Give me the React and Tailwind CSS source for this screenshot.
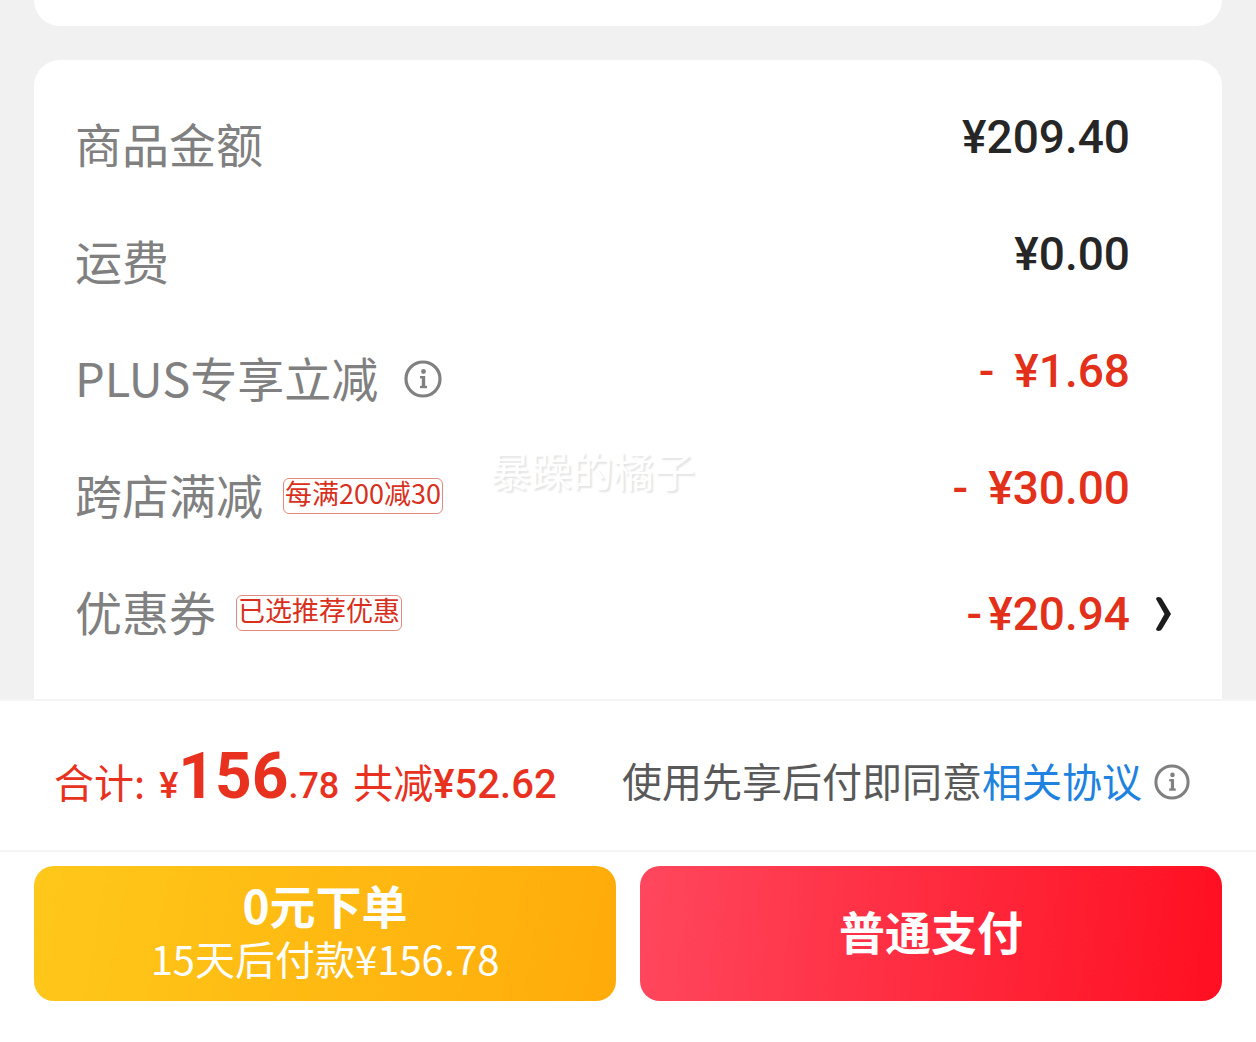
import clsx from "clsx";

const rows = [
  { label: "商品金额", amount: "¥209.40" },
  { label: "运费", amount: "¥0.00" },
  { label: "PLUS专享立减", info: true, sign: "-", amount: "¥1.68" },
  { label: "跨店满减", tag: "每满200减30", sign: "-", amount: "¥30.00" },
  { label: "优惠券", tag: "已选推荐优惠", sign: "-", amount: "¥20.94", link: true },
];

const InfoIcon = ({ className }) => (
  <svg viewBox="0 0 38 38" fill="none" stroke="#808080" className={className}>
    <circle cx="19" cy="19" r="17" strokeWidth="3.2" />
    <circle cx="19.5" cy="11.5" r="2.4" fill="#808080" stroke="none" />
    <path d="M16 17.2h4.5" strokeWidth="2.4" />
    <path d="M19.5 16v11" strokeWidth="3.4" />
    <path d="M16 27h7" strokeWidth="2.4" />
  </svg>
);

const ChevronIcon = () => (
  <svg viewBox="0 0 16 36" className="h-9 w-4" fill="#1c1c1c">
    <path d="M0 3Q0 1 2.5 1T6 3L15 18 6 33Q5 35 2.5 35T0 33L8.5 18Z" />
  </svg>
);

const Row = ({ label, info, tag, sign, amount, link }) => (
  <div className="flex h-[117px] items-center pl-[41px] pr-[50px]">
    <dt className="flex flex-1 items-center pb-1 text-[47px] leading-[60px] text-[#808080]">
      <span className="pb-1">{label}</span>
      {info && (
        <button type="button" aria-label="说明" className="ml-[26px]">
          <InfoIcon className="size-[38px]" />
        </button>
      )}
      {tag && (
        <span className="ml-5 h-9 rounded-md border border-[#e08a80] px-px text-[27px] leading-7 text-[#d8301c]">
          {tag}
        </span>
      )}
    </dt>
    <dd
      className={clsx(
        "flex items-center font-['Roboto','Noto_Sans_CJK_SC',sans-serif] text-[46px] font-medium leading-[60px]",
        sign ? "text-[#e2301a]" : "text-[#262626]",
        link ? "gap-[26px] pb-0.5" : "mr-[42px] pb-5"
      )}
    >
      <span className={clsx("flex", link ? "gap-1.5" : "gap-5")}>
        {sign && <span>{sign}</span>}
        <span>{amount}</span>
      </span>
      {link && (
        <button type="button" aria-label="选择优惠券">
          <ChevronIcon />
        </button>
      )}
    </dd>
  </div>
);

const Summary = () => (
  <div className="flex h-[151px] items-center justify-between border-b-2 border-[#f5f5f5] pl-[54px] pr-[66px] pt-3 text-[40px] leading-[60px]">
    <p className="flex items-baseline pb-2 text-[#e8321f]">
      <span>合计:</span>
      <span className="ml-3.5 flex items-baseline font-['Roboto','Noto_Sans_CJK_SC',sans-serif] text-4xl font-medium">
        ¥<strong className="text-[64px] font-bold">156</strong>.78
      </span>
      <span className="ml-3.5">共减</span>
      <span className="font-['Roboto','Noto_Sans_CJK_SC',sans-serif] font-medium">
        ¥52.62
      </span>
    </p>
    <p className="flex items-center text-[#595959]">
      <span className="pb-1">
        使用先享后付即同意
        <a href="#agreement" className="text-[#2082e0]">
          相关协议
        </a>
      </span>
      <button type="button" aria-label="协议说明" className="ml-3">
        <InfoIcon className="size-9" />
      </button>
    </p>
  </div>
);

const App = () => {
  return (
    <div className="flex min-h-screen flex-col bg-[#f1f1f1] font-['Noto_Sans_CJK_SC',sans-serif]">
      <main className="flex flex-1 flex-col gap-[34px] px-[34px]">
        <div className="h-[26px] rounded-b-[26px] bg-white" />

        <section className="relative flex-1 rounded-t-[26px] bg-white pb-[26px] pt-7">
          <dl>
            {rows.map((row) => (
              <Row key={row.label} {...row} />
            ))}
          </dl>
          <span className="pointer-events-none absolute left-[456px] top-[379px] text-[41px] leading-[60px] text-white [text-shadow:2px_2px_2px_#e4e4e4]">
            暴躁的橘子
          </span>
        </section>
      </main>

      <footer className="border-t-2 border-[#f5f5f5] bg-white">
        <Summary />
        <div className="grid grid-cols-2 gap-6 px-[34px] pb-[41px] pt-3.5 text-white">
          <button
            type="button"
            className="flex h-[135px] flex-col items-center justify-center rounded-[20px] bg-[linear-gradient(100deg,#ffc81a,#ffab0a)] pb-1.5"
          >
            <span className="text-[46px] font-bold leading-[54px]">
              0元下单
            </span>
            <span className="text-[40px] leading-[54px]">
              15天后付款¥156.78
            </span>
          </button>
          <button
            type="button"
            className="h-[135px] rounded-[20px] bg-[linear-gradient(95deg,#ff475d,#ff0f21)] pb-2 text-[46px] font-bold leading-[60px]"
          >
            普通支付
          </button>
        </div>
      </footer>
    </div>
  );
};

export default App;
